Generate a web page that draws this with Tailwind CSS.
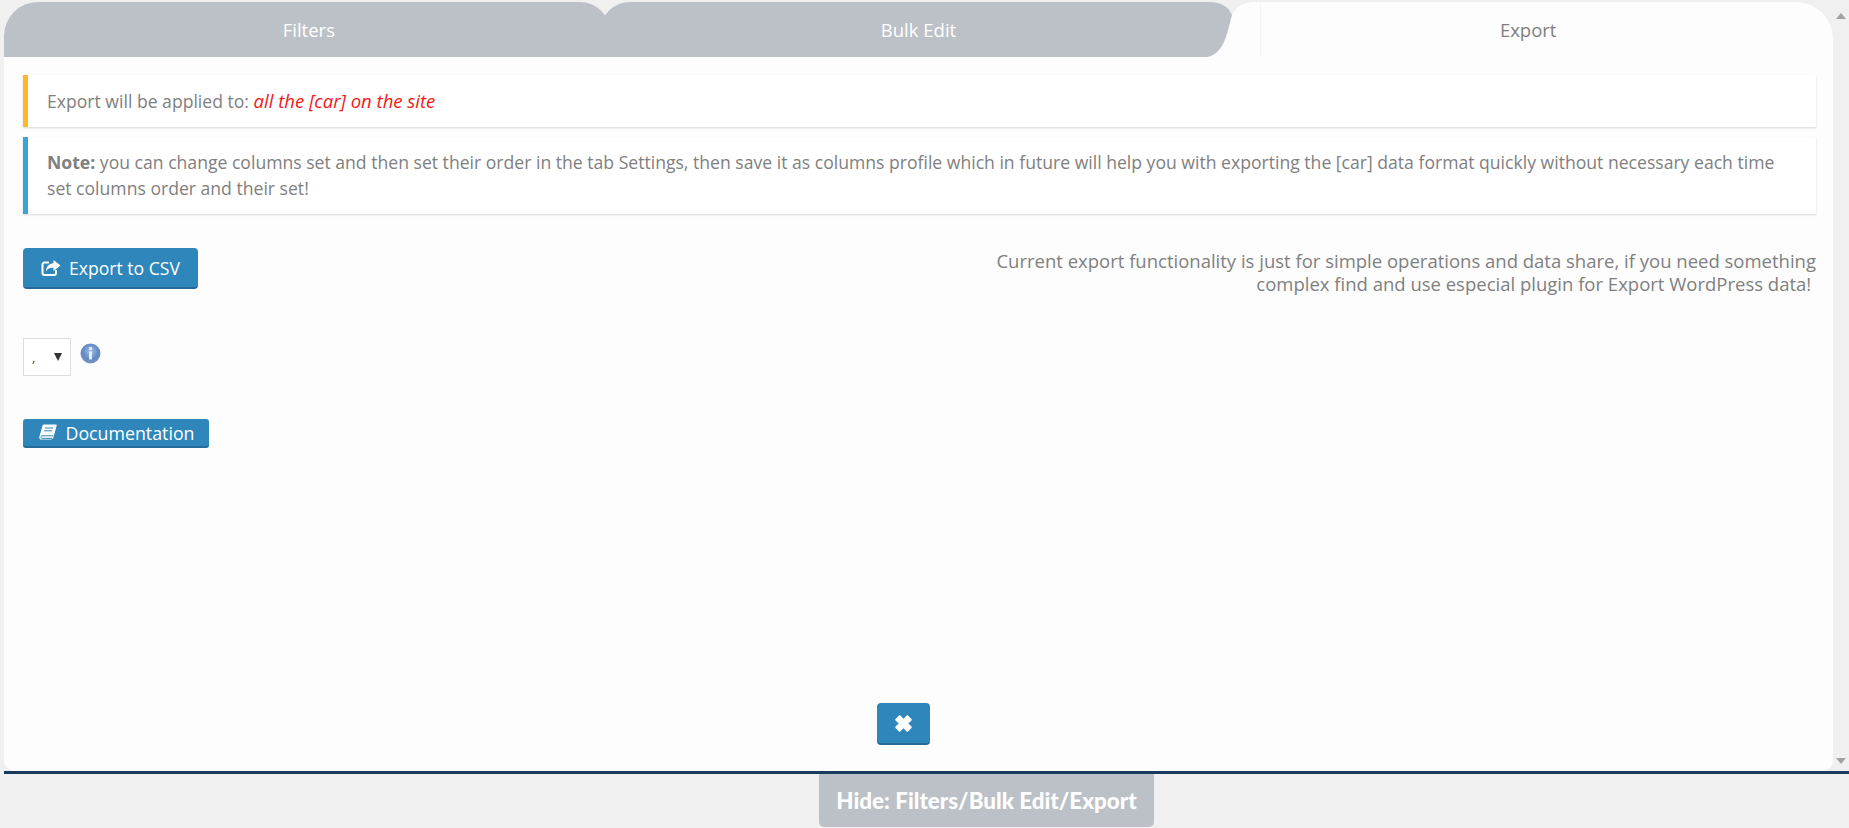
<!DOCTYPE html>
<html lang="en">
<head>
  <meta charset="UTF-8" />
  <title>Export</title>
  <script src="https://cdn.jsdelivr.net/npm/@tailwindcss/browser@4"></script>
</head>
<body class="h-[828px] overflow-hidden bg-[#f0f0f0] font-['Open_Sans',sans-serif] text-[17.6px] leading-[26px] text-[#808080]">
  <div class="pl-[4px] pt-[2px]">
    <div class="flex h-[769px]">
      <!-- Panel -->
      <div class="flex w-[1829px] flex-col">
        <!-- Tabs -->
        <div class="relative grid h-[55px] shrink-0 grid-cols-3 text-[18.5px]">
          <svg class="absolute inset-0" width="1829" height="55" viewBox="0 0 1829 55">
            <path fill="#fdfdfd" d="M1190 55 L1228 13 C1232 5 1240 0 1250 0 H1792 A37 37 0 0 1 1829 37 V55 Z" />
            <path fill="#f5f5f5" d="M1256 0 h1 v55 h-1 z" />
            <path fill="#bcc1c8" d="M0 55 V34 A34 34 0 0 1 34 0 H576 A30 30 0 0 1 606 30 V55 Z" />
            <path fill="#bcc1c8" d="M596 55 V30 A30 30 0 0 1 626 0 H1205 C1217 0 1225 5 1228 13 C1224 25 1222 52 1203 55 Z" />
          </svg>
          <div class="relative flex items-center justify-center text-white">Filters</div>
          <div class="relative flex items-center justify-center text-white">Bulk Edit</div>
          <div class="relative flex items-center justify-center">Export</div>
        </div>

        <!-- Body -->
        <div class="flex flex-1 flex-col rounded-b-[11px] bg-[#fdfdfd] pl-[19px] pr-[17px] pt-[18px]">
          <div class="border-l-[5px] border-[#fbb829] bg-white py-[13px] pl-[19px] pr-[20px] shadow-[0_1px_2px_rgba(0,0,0,0.15)]">
            Export will be applied to: <span class="text-[18.5px] italic text-[#f01919]">all the [car] on the site</span>
          </div>
          <div class="mt-[10px] border-l-[5px] border-[#38a5d6] bg-white py-[12px] pb-[13px] pl-[19px] pr-[30px] shadow-[0_1px_2px_rgba(0,0,0,0.15)]">
            <b class="font-bold">Note:</b> you can change columns set and then set their order in the tab Settings, then save it as columns profile which in future will help you with exporting the [car] data format quickly without necessary each time set columns order and their set!
          </div>

          <div class="mt-[34px] flex items-start justify-between">
            <button class="flex h-[41px] w-[175px] items-center justify-center gap-[8px] rounded-[4px] border-b-2 border-[#24699a] bg-[#2e86bb] text-white">
              <svg width="20" height="18" viewBox="0 0 20 18" fill="none">
                <path d="M8 3.5 H3.5 A2 2 0 0 0 1.5 5.5 V14 A2 2 0 0 0 3.5 16 H13 A2 2 0 0 0 15 14 V11" stroke="#fff" stroke-width="2" />
                <path fill="#fff" d="M12.5 1 L19.5 6.5 L12.5 12 V8.8 C9 8.6 6.5 9.6 5 12.5 C5 7.5 8 4.4 12.5 4.2 Z" />
              </svg>
              Export to CSV
            </button>
            <p class="w-[840px] pt-[1px] text-right text-[18.5px] leading-[23px]">Current export functionality is just for simple operations and data share, if you need something complex find and use especial plugin for Export WordPress data!&nbsp;</p>
          </div>

          <div class="mt-[43px] flex items-start">
            <div class="relative h-[38px] w-[48px]">
              <select class="h-full w-full appearance-none border border-[#ddd] bg-white pl-[8px] text-[13px] text-[#444]"><option>,</option></select>
              <svg class="absolute left-[31px] top-[15px]" width="8" height="8" viewBox="0 0 10 9" preserveAspectRatio="none"><path fill="#333" d="M0 0 H10 L5 9 Z" /></svg>
            </div>
            <svg class="ml-[9px] mt-[5px]" width="21" height="21" viewBox="0 0 21 21">
              <defs>
                <radialGradient id="info" cx="50%" cy="40%" r="60%">
                  <stop offset="0%" stop-color="#a9c4e4" />
                  <stop offset="65%" stop-color="#5f88c4" />
                  <stop offset="100%" stop-color="#7f98bd" />
                </radialGradient>
              </defs>
              <circle cx="10.5" cy="10.5" r="10" fill="url(#info)" />
              <rect x="9" y="4" width="3" height="3" rx="1" fill="#e8eef7" />
              <rect x="9" y="8.5" width="3" height="8" fill="#e8eef7" />
            </svg>
          </div>

          <button class="mt-[43px] flex h-[29px] w-[186px] items-center justify-center gap-[8px] rounded-[3px] border-b-2 border-[#24699a] bg-[#2e86bb] pl-[2px] text-[17.8px] text-white">
            <svg width="18" height="17" viewBox="0 0 18 17">
              <path fill="#fff" d="M5 0.5 H17 C17.6 0.5 17.9 1 17.7 1.6 L14.6 13 C14.2 14.6 13.2 15.5 11.8 15.5 H2.5 C0.8 15.5 -0.2 14.2 0.4 12.4 L3.4 2 C3.7 1 4.2 0.5 5 0.5 Z" />
              <path stroke="#2e86bb" stroke-width="1" fill="none" d="M6 4 H14 M5.2 6.8 H13.2 M2 12.6 C2 12 2.4 11.8 3 11.8 H14.5 M2 13 C2 14 2.4 14.4 3.2 14.4 H13" />
            </svg>
            Documentation
          </button>

          <div class="mb-[26px] ml-[854px] mt-auto">
            <button class="flex h-[42px] w-[53px] items-center justify-center rounded-[4px] border-b-2 border-[#24699a] bg-[#2e86bb]">
              <svg width="19" height="19" viewBox="0 0 19 19"><path fill="#fff" d="M1.5 5 L5 1.5 Q5.7 0.9 6.4 1.5 L9.5 4.7 L12.6 1.5 Q13.3 0.9 14 1.5 L17.5 5 Q18.1 5.7 17.5 6.4 L14.3 9.5 L17.5 12.6 Q18.1 13.3 17.5 14 L14 17.5 Q13.3 18.1 12.6 17.5 L9.5 14.3 L6.4 17.5 Q5.7 18.1 5 17.5 L1.5 14 Q0.9 13.3 1.5 12.6 L4.7 9.5 L1.5 6.4 Q0.9 5.7 1.5 5 Z" /></svg>
            </button>
          </div>
        </div>
      </div>

      <!-- Scrollbar -->
      <div class="flex w-[16px] flex-col items-center justify-between pb-[7px] pt-[11px]">
        <svg width="10" height="6" viewBox="0 0 10 6"><path fill="#a3a3a3" d="M5 0 L10 6 H0 Z" /></svg>
        <svg width="10" height="6" viewBox="0 0 10 6"><path fill="#a3a3a3" d="M0 0 H10 L5 6 Z" /></svg>
      </div>
    </div>
    <div class="h-[3px] bg-[#1b3a5f]"></div>
    <div class="ml-[815px] flex h-[53px] w-[335px] items-center justify-center rounded-b-[5px] bg-[#bcc1c8] font-['Lato',sans-serif] text-[22.4px] font-black text-white">Hide: Filters/Bulk Edit/Export</div>
  </div>
</body>
</html>
